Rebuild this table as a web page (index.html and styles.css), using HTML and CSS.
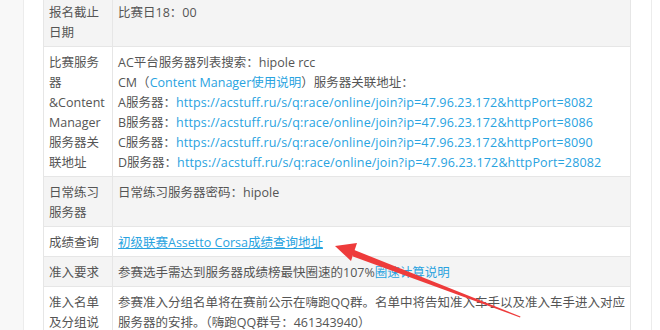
FILE: index.html
```html
<!DOCTYPE html>
<html lang="zh-CN">
<head>
<meta charset="utf-8">
<link rel="stylesheet" href="styles.css">
</head>
<body>
<div class="page">
  <div class="side"></div>
  <div class="content">
    <table class="info">
      <tr class="alt">
        <td class="label">报名截止日期</td>
        <td class="value">比赛日18：00</td>
      </tr>
      <tr>
        <td class="label">比赛服务器&amp;Content Manager服务器关联地址</td>
        <td class="value">AC平台服务器列表搜索：hipole rcc<br>CM（<a href="#">Content Manager使用说明</a>）服务器关联地址：<br>A服务器：<a href="#" class="url">https://acstuff.ru/s/q:race/online/join?ip=47.96.23.172&amp;httpPort=8082</a><br>B服务器：<a href="#" class="url">https://acstuff.ru/s/q:race/online/join?ip=47.96.23.172&amp;httpPort=8086</a><br>C服务器：<a href="#" class="url">https://acstuff.ru/s/q:race/online/join?ip=47.96.23.172&amp;httpPort=8090</a><br>D服务器：<a href="#" class="url">https://acstuff.ru/s/q:race/online/join?ip=47.96.23.172&amp;httpPort=28082</a></td>
      </tr>
      <tr class="alt">
        <td class="label">日常练习服务器</td>
        <td class="value">日常练习服务器密码：hipole</td>
      </tr>
      <tr>
        <td class="label">成绩查询</td>
        <td class="value"><a href="#" class="under">初级联赛Assetto Corsa成绩查询地址</a></td>
      </tr>
      <tr class="alt">
        <td class="label">准入要求</td>
        <td class="value">参赛选手需达到服务器成绩榜最快圈速的107%<a href="#">圈速计算说明</a></td>
      </tr>
      <tr>
        <td class="label">准入名单及分组说明</td>
        <td class="value">参赛准入分组名单将在赛前公示在嗨跑QQ群。名单中将告知准入车手以及准入车手进入对应服务器的安排。（嗨跑QQ群号：461343940）</td>
      </tr>
    </table>
  </div>
</div>
<svg class="arrow" width="660" height="330" viewBox="0 0 660 330">
  <polygon points="335,246 357,243 351,261" fill="#ee3b3b"/>
  <polygon points="353,249.5 353,256.5 520,317.5 520.5,316.5" fill="#ee3b3b"/>
</svg>
</body>
</html>
```
FILE: styles.css
```css
html, body {
  margin: 0;
  padding: 0;
  background: #ffffff;
}
body {
  font-family: "Open Sans", "Noto Sans CJK SC", sans-serif;
  font-size: 12.5px;
  color: #555555;
  width: 660px;
  height: 330px;
  overflow: hidden;
  position: relative;
}
.page {
  display: flex;
  height: 330px;
}
.side {
  width: 23px;
  background: #f8f8f8;
  border-right: 1px solid #ececec;
  flex: none;
}
.content {
  width: 588px;
  padding: 0 20px 0 19px;
  border-right: 1px solid #ececec;
  flex: none;
}
.info {
  border-collapse: collapse;
  width: 588px;
  margin-top: -4px;
  line-height: 20px;
}
.info td {
  border: 1px solid #e6e6e6;
  padding: 6px 5px 3px;
  vertical-align: top;
}
.info tr.alt td {
  background: #f4f4f4;
}
.info td.label {
  width: 58px;
  border-right: 1px dotted #e8e8e8;
}
.info a {
  color: #29a3df;
  text-decoration: none;
}
.info a.url {
  letter-spacing: 0.14px;
}
.info a.under {
  text-decoration: underline;
}
.arrow {
  position: absolute;
  left: 0;
  top: 0;
  pointer-events: none;
}
```
